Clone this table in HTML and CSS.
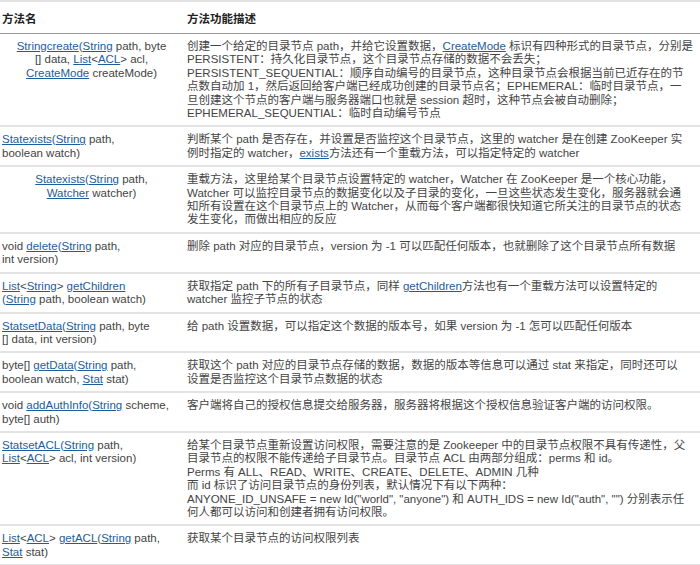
FILE: index.html
```html
<!DOCTYPE html>
<html lang="zh">
<head>
<meta charset="utf-8">
<title>ZooKeeper API</title>
<link rel="stylesheet" href="styles.css">
</head>
<body>
<table class="api">
  <colgroup><col class="c-name"><col class="c-desc"></colgroup>
  <thead>
    <tr><th>方法名</th><th class="desc">方法功能描述</th></tr>
  </thead>
  <tbody>
    <tr>
      <td class="name center"><a>Stringcreate</a><span class="lk">(</span><a>String</a> path, byte<br>[] data, <a>List</a>&lt;<a>ACL</a>&gt; acl,<br><a>CreateMode</a> createMode)</td>
      <td class="desc">创建一个给定的目录节点 path，并给它设置数据，<a>CreateMode</a> 标识有四种形式的目录节点，分别是<br>PERSISTENT：持久化目录节点，这个目录节点存储的数据不会丢失；<br>PERSISTENT_SEQUENTIAL：顺序自动编号的目录节点，这种目录节点会根据当前已近存在的节<br>点数自动加 1，然后返回给客户端已经成功创建的目录节点名；EPHEMERAL：临时目录节点，一<br>旦创建这个节点的客户端与服务器端口也就是 session 超时，这种节点会被自动删除；<br>EPHEMERAL_SEQUENTIAL：临时自动编号节点</td>
    </tr>
    <tr>
      <td class="name"><a>Statexists</a><span class="lk">(</span><a>String</a> path,<br>boolean watch)</td>
      <td class="desc">判断某个 path 是否存在，并设置是否监控这个目录节点，这里的 watcher 是在创建 ZooKeeper 实<br>例时指定的 watcher，<a>exists</a>方法还有一个重载方法，可以指定特定的 watcher</td>
    </tr>
    <tr>
      <td class="name center"><a>Statexists</a><span class="lk">(</span><a>String</a> path,<br><a>Watcher</a> watcher)</td>
      <td class="desc">重载方法，这里给某个目录节点设置特定的 watcher，Watcher 在 ZooKeeper 是一个核心功能，<br>Watcher 可以监控目录节点的数据变化以及子目录的变化，一旦这些状态发生变化，服务器就会通<br>知所有设置在这个目录节点上的 Watcher，从而每个客户端都很快知道它所关注的目录节点的状态<br>发生变化，而做出相应的反应</td>
    </tr>
    <tr>
      <td class="name">void <a>delete</a><span class="lk">(</span><a>String</a> path,<br>int version)</td>
      <td class="desc">删除 path 对应的目录节点，version 为 -1 可以匹配任何版本，也就删除了这个目录节点所有数据</td>
    </tr>
    <tr>
      <td class="name"><a>List</a>&lt;<a>String</a>&gt; <a>getChildren</a><br><span class="lk">(</span><a>String</a> path, boolean watch)</td>
      <td class="desc">获取指定 path 下的所有子目录节点，同样 <a>getChildren</a>方法也有一个重载方法可以设置特定的<br>watcher 监控子节点的状态</td>
    </tr>
    <tr>
      <td class="name"><a>StatsetData</a><span class="lk">(</span><a>String</a> path, byte<br>[] data, int version)</td>
      <td class="desc">给 path 设置数据，可以指定这个数据的版本号，如果 version 为 -1 怎可以匹配任何版本</td>
    </tr>
    <tr>
      <td class="name">byte[] <a>getData</a><span class="lk">(</span><a>String</a> path,<br>boolean watch, <a>Stat</a> stat)</td>
      <td class="desc">获取这个 path 对应的目录节点存储的数据，数据的版本等信息可以通过 stat 来指定，同时还可以<br>设置是否监控这个目录节点数据的状态</td>
    </tr>
    <tr>
      <td class="name">void <a>addAuthInfo</a><span class="lk">(</span><a>String</a> scheme,<br>byte[] auth)</td>
      <td class="desc">客户端将自己的授权信息提交给服务器，服务器将根据这个授权信息验证客户端的访问权限。</td>
    </tr>
    <tr>
      <td class="name"><a>StatsetACL</a><span class="lk">(</span><a>String</a> path,<br><a>List</a>&lt;<a>ACL</a>&gt; acl, int version)</td>
      <td class="desc">给某个目录节点重新设置访问权限，需要注意的是 Zookeeper 中的目录节点权限不具有传递性，父<br>目录节点的权限不能传递给子目录节点。目录节点 ACL 由两部分组成：perms 和 id。<br>Perms 有 ALL、READ、WRITE、CREATE、DELETE、ADMIN 几种<br>而 id 标识了访问目录节点的身份列表，默认情况下有以下两种：<br>ANYONE_ID_UNSAFE = new Id("world", "anyone") 和 AUTH_IDS = new Id("auth", "") 分别表示任<br>何人都可以访问和创建者拥有访问权限。</td>
    </tr>
    <tr>
      <td class="name"><a>List</a>&lt;<a>ACL</a>&gt; <a>getACL</a><span class="lk">(</span><a>String</a> path,<br><a>Stat</a> stat)</td>
      <td class="desc">获取某个目录节点的访问权限列表</td>
    </tr>
  </tbody>
</table>
</body>
</html>
```

FILE: styles.css
```css
html, body {
  margin: 0;
  padding: 0;
  background: #fff;
}

body {
  font-family: "Liberation Sans", Arial, "Noto Sans CJK SC", sans-serif;
  font-size: 11.5px;
  color: #444;
}

.api {
  width: 700px;
  border-collapse: collapse;
  table-layout: fixed;
  border-top: 2px solid #e2e2e2;
}

.c-name { width: 183px; }
.c-desc { width: 517px; }

.api th {
  height: 31px;
  padding: 0 2px;
  text-align: left;
  vertical-align: middle;
  font-weight: bold;
  font-size: 11.5px;
  color: #222;
  border-bottom: 1px solid #9a9a9a;
}

.api th.desc {
  padding-left: 4px;
}

.api td {
  vertical-align: top;
  line-height: 13.4px;
  padding: 6px 2px 5px 2px;
  border-bottom: 2px solid #e3e3e3;
  white-space: nowrap;
}

.api td.desc {
  padding-left: 4px;
  padding-right: 0;
}

.api td.center {
  text-align: center;
}

.api a {
  color: #1c5d9c;
  text-decoration: underline;
}

.lk {
  color: #1c5d9c;
}
```
